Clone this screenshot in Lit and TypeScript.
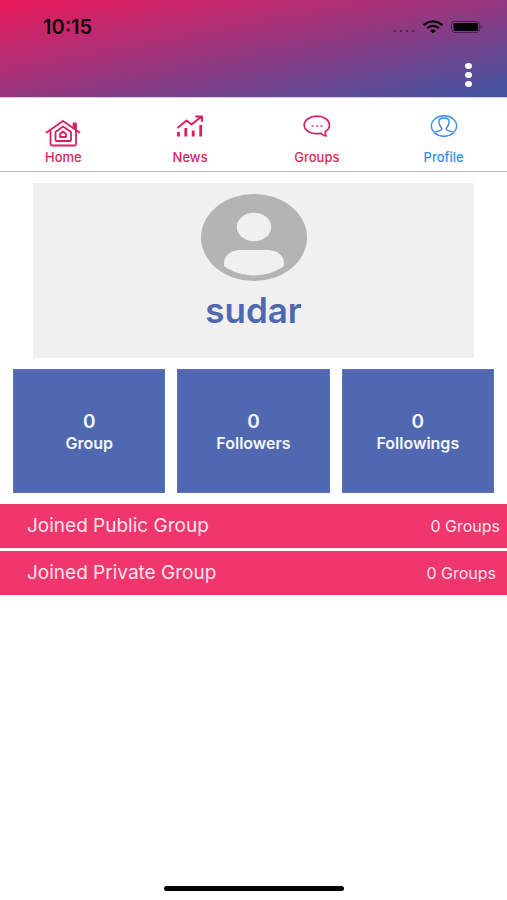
import { LitElement, html, css, svg } from "lit";
import { customElement, property } from "lit/decorators.js";
import { classMap } from "lit/directives/class-map.js";

const homeIcon = svg`
  <svg class="glyph tall" viewBox="0 0 36 28" fill="none" stroke="currentColor" stroke-width="1.800" stroke-linejoin="round" stroke-linecap="round" aria-hidden="true">
    <path d="M1.500 13.500 L18 2 L34.500 13.500"/>
    <path d="M5.500 12 V25 Q5.500 26.500 7 26.500 H29.500 Q31 26.500 31 25 V12"/>
    <path d="M28.500 4.500 H31 V10.500 L28.500 9 Z" fill="currentColor"/>
    <path d="M10.500 13 L18 7.500 L26 13 V21 Q26 22 25 22 H11.500 Q10.500 22 10.500 21 Z"/>
    <path d="M15 18 V15 L18 12.500 L21 15 V18 Z"/>
  </svg>`;

const newsIcon = svg`
  <svg class="glyph" viewBox="0 0 28 22" fill="none" stroke="currentColor" stroke-linecap="round" stroke-linejoin="round" aria-hidden="true">
    <path stroke-width="2" d="M2 12.500 L10.500 5.500 L15.500 9.500 L25.500 1.500 M20 1.500 H26 V6"/>
    <path stroke-width="2.800" stroke-linecap="butt" d="M2.500 17 V21.500 M9.800 13 V21.500 M17.200 15.500 V21.500 M24.700 10 V21.500"/>
  </svg>`;

const chatIcon = svg`
  <svg class="glyph" viewBox="0 0 28 22" fill="none" stroke="currentColor" stroke-width="1.700" stroke-linejoin="round" aria-hidden="true">
    <path d="M14 1.200 C21 1.200 26.500 5.200 26.500 10 C26.500 12.600 25 15 22.300 16.600 C22 18.500 22.300 20 23.300 21 C20.800 20.800 19 19.600 18 18.300 C8.500 20 1.200 16 1.200 10 C1.200 5.200 7 1.200 14 1.200 Z"/>
    <g fill="currentColor" stroke="none" opacity="0.800">
      <circle cx="9.500" cy="11" r="1.100"/><circle cx="14" cy="11" r="1.100"/><circle cx="18.500" cy="11" r="1.100"/>
    </g>
  </svg>`;

const profileIcon = svg`
  <svg class="glyph" viewBox="0 0 28 22" fill="none" stroke="currentColor" stroke-width="1.400" stroke-linejoin="round" aria-hidden="true">
    <ellipse cx="14" cy="11" rx="12.600" ry="10.200"/>
    <path d="M4.500 17.500 C6 16.500 9.500 16.200 11.200 15 C12 14.200 11.800 13 10.800 12 C9.300 10.200 8.800 8.500 8.900 6.500 C9 4.200 11 3 14 3 C17 3 19 4.200 19.100 6.500 C19.200 8.500 18.700 10.200 17.200 12 C16.200 13 16 14.200 16.800 15 C18.500 16.200 22 16.500 23.500 17.500"/>
  </svg>`;

@customElement("status-bar")
class StatusBar extends LitElement {
  static styles = css`
    :host {
      display: flex;
      justify-content: space-between;
      align-items: center;
      height: 54px;
      padding: 0 24px 0 43px;
      color: #12020a;
      font: 600 20px/24px Inter, sans-serif;
    }
    .signals { display: flex; align-items: center; gap: 8px; }
    .cell { width: 22px; height: 14px; }
    .wifi { width: 20px; height: 14px; }
    .battery { width: 32px; height: 14px; }
  `;
  render() {
    return html`
      <span>10:15</span>
      <div class="signals">
        <svg class="cell" viewBox="0 0 22 14" fill="#3d0b40" opacity="0.6" aria-hidden="true">
          <circle cx="2" cy="11" r="1.300"/><circle cx="8" cy="11" r="1.300"/><circle cx="14" cy="11" r="1.300"/><circle cx="20" cy="11" r="1.300"/>
        </svg>
        <svg class="wifi" viewBox="0 0 20 14" fill="none" stroke="#050006" stroke-width="2.200" aria-hidden="true">
          <path d="M0.500 5 Q10 -2.200 19.500 5"/>
          <path d="M4 8.200 Q10 3.400 16 8.200"/>
          <path d="M7 10.800 Q10 8.300 13 10.800 L10 13.500 Z" fill="#050006" stroke="none"/>
        </svg>
        <svg class="battery" viewBox="0 0 32 14" aria-hidden="true">
          <rect x="0.700" y="1.500" width="28" height="11" rx="3" fill="none" stroke="#1c0a35" stroke-opacity="0.600"/>
          <rect x="2.500" y="3" width="24.500" height="8" rx="1.500" fill="#020003"/>
          <path d="M30 5.500 Q32 7 30 8.500 Z" fill="#1c0a35" opacity="0.600"/>
        </svg>
      </div>
    `;
  }
}

@customElement("stat-tile")
class StatTile extends LitElement {
  @property() label = "";
  @property({ type: Number }) value = 0;
  static styles = css`
    :host {
      display: flex;
      flex-direction: column;
      align-items: center;
      justify-content: center;
      min-height: 124px;
      box-sizing: border-box;
      border: 1px solid #5c74ba;
      background: #5068af;
      color: #f4f7ff;
      font-family: Inter, sans-serif;
      font-weight: 600;
      padding-top: 2px;
    }
    .value { font-size: 19px; line-height: 22px; }
    .label { font-size: 16px; line-height: 20px; }
  `;
  render() {
    return html`<span class="value">${this.value}</span><span class="label">${this.label}</span>`;
  }
}

@customElement("app-root")
class AppRoot extends LitElement {
  static styles = css`
    :host {
      display: flex;
      flex-direction: column;
      min-height: 100vh;
      background: #fff;
      font-family: Inter, sans-serif;
    }
    header {
      background: linear-gradient(to bottom right, #ec1a5b, #3f55a2);
      min-height: 98px;
      border-bottom: 1px solid #d9cbe8;
      box-sizing: border-box;
      padding-bottom: 8px;
    }
    .tools { display: flex; justify-content: flex-end; padding: 0 26px; }
    .more {
      display: flex;
      flex-direction: column;
      align-items: center;
      gap: 3px;
      border: 0;
      padding: 9px 9px 0;
      background: none;
    }
    .dot { width: 7px; height: 6px; border-radius: 50%; background: #fff; }
    nav {
      display: grid;
      grid-template-columns: repeat(4, 1fr);
      height: 74px;
      border-bottom: 1px solid #bdbdbd;
      box-sizing: border-box;
    }
    .tab {
      display: flex;
      flex-direction: column;
      align-items: center;
      justify-content: flex-end;
      padding-bottom: 6px;
      color: #dc1f5a;
      font-size: 13px;
      line-height: 16px;
      font-weight: 500;
      text-decoration: none;
    }
    .tab.active { color: #358ded; }
    .picture { display: flex; align-items: flex-start; height: 34px; }
    .glyph { width: 28px; height: 22px; }
    .glyph.tall { width: 36px; height: 28px; align-self: flex-end; margin-bottom: 2px; }
    .card {
      display: flex;
      flex-direction: column;
      align-items: center;
      margin: 11px 33px;
      min-height: 175px;
      box-sizing: border-box;
      padding-top: 11px;
      background: #f0f0f0;
    }
    .avatar { width: 106px; height: 87px; }
    h1 { margin: 9px 0 0; color: #5068af; font-size: 35px; line-height: 40px; font-weight: 600; }
    .stats { display: grid; grid-template-columns: repeat(3, 1fr); gap: 12px; padding: 0 13px; }
    .rows { display: flex; flex-direction: column; gap: 3px; margin-top: 11px; }
    .row {
      display: flex;
      align-items: center;
      justify-content: space-between;
      min-height: 44px;
      border: 0;
      padding: 0 7px 0 27px;
      background: #ef366d;
      color: #ffe3ec;
      font: 400 19px/24px Inter, sans-serif;
    }
    .row.inset { padding-right: 11px; }
    .count { font-size: 16px; }
    .home-bar {
      width: 180px;
      height: 5px;
      margin: auto auto 9px;
      border-radius: 3px;
      background: #000;
    }
  `;

  private tabs = [
    { name: "Home", icon: homeIcon, active: false },
    { name: "News", icon: newsIcon, active: false },
    { name: "Groups", icon: chatIcon, active: false },
    { name: "Profile", icon: profileIcon, active: true },
  ];

  render() {
    return html`
      <header>
        <status-bar></status-bar>
        <div class="tools">
          <button class="more" aria-label="More options">
            <span class="dot"></span><span class="dot"></span><span class="dot"></span>
          </button>
        </div>
      </header>
      <nav>
        ${this.tabs.map(
          (t) => html`<a href="#" class=${classMap({ tab: true, active: t.active })}>
            <span class="picture">${t.icon}</span><span>${t.name}</span>
          </a>`
        )}
      </nav>
      <section class="card">
        <svg class="avatar" viewBox="0 0 106 87" aria-hidden="true">
          <ellipse cx="53" cy="43.500" rx="53" ry="43.500" fill="#b4b4b4"/>
          <ellipse cx="53" cy="33" rx="17.200" ry="14.300" fill="#f0f0f0"/>
          <path d="M23 69.500 C23 61 30 56 40 56 H66 C76 56 83 61 83 69.500 V72 C66 84.500 40 84.500 23 72 Z" fill="#f0f0f0"/>
        </svg>
        <h1>sudar</h1>
      </section>
      <section class="stats">
        <stat-tile label="Group" value="0"></stat-tile>
        <stat-tile label="Followers" value="0"></stat-tile>
        <stat-tile label="Followings" value="0"></stat-tile>
      </section>
      <section class="rows">
        <button class="row"><span>Joined Public Group</span><span class="count">0 Groups</span></button>
        <button class="row inset"><span>Joined Private Group</span><span class="count">0 Groups</span></button>
      </section>
      <div class="home-bar"></div>
    `;
  }
}
